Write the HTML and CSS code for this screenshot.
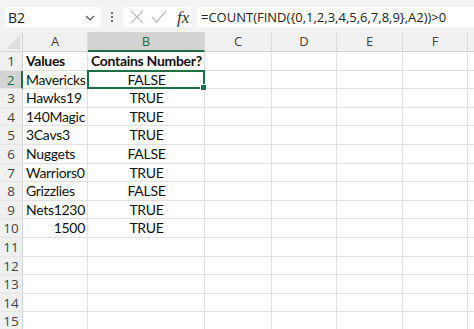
FILE: index.html
```html
<!DOCTYPE html>
<html>
<head>
<meta charset="utf-8">
<link rel="stylesheet" href="styles.css">
</head>
<body>
<div class="toolbar">
  <div class="namebox"><span>B2</span>
    <svg class="chev" width="10" height="6" viewBox="0 0 10 6"><path d="M1 1 L5 5 L9 1" fill="none" stroke="#555" stroke-width="1.2"/></svg>
  </div>
  <div class="dots"><i></i><i></i><i></i></div>
  <div class="fxbox">
    <svg width="14" height="14" viewBox="0 0 14 14"><path d="M1 1 L13 13 M13 1 L1 13" stroke="#bdbdbd" stroke-width="1.3" fill="none"/></svg>
    <svg width="16" height="14" viewBox="0 0 16 14"><path d="M1 7 L5.5 12 L15 1" stroke="#bdbdbd" stroke-width="1.3" fill="none"/></svg>
    <span class="fx">fx</span>
  </div>
  <div class="formula">=COUNT(FIND({0,1,2,3,4,5,6,7,8,9},A2))&gt;0</div>
</div>
<div class="grid">
  <div class="corner"><svg width="16" height="16" viewBox="0 0 16 16"><path d="M16 2 L16 16 L2 16 Z" fill="#dedede"/></svg></div>
  <div class="ch">A</div><div class="ch sel">B</div><div class="ch">C</div><div class="ch">D</div><div class="ch">E</div><div class="ch">F</div><div class="ch last"></div>

  <div class="rh">1</div><div class="c b">Values</div><div class="c b">Contains Number?</div><div class="c"></div><div class="c"></div><div class="c"></div><div class="c"></div><div class="c last"></div>
  <div class="rh rsel">2</div><div class="c">Mavericks</div><div class="c ctr active">FALSE<span class="handle"></span></div><div class="c"></div><div class="c"></div><div class="c"></div><div class="c"></div><div class="c last"></div>
  <div class="rh">3</div><div class="c">Hawks19</div><div class="c ctr">TRUE</div><div class="c"></div><div class="c"></div><div class="c"></div><div class="c"></div><div class="c last"></div>
  <div class="rh">4</div><div class="c">140Magic</div><div class="c ctr">TRUE</div><div class="c"></div><div class="c"></div><div class="c"></div><div class="c"></div><div class="c last"></div>
  <div class="rh">5</div><div class="c">3Cavs3</div><div class="c ctr">TRUE</div><div class="c"></div><div class="c"></div><div class="c"></div><div class="c"></div><div class="c last"></div>
  <div class="rh">6</div><div class="c">Nuggets</div><div class="c ctr">FALSE</div><div class="c"></div><div class="c"></div><div class="c"></div><div class="c"></div><div class="c last"></div>
  <div class="rh">7</div><div class="c">Warriors0</div><div class="c ctr">TRUE</div><div class="c"></div><div class="c"></div><div class="c"></div><div class="c"></div><div class="c last"></div>
  <div class="rh">8</div><div class="c">Grizzlies</div><div class="c ctr">FALSE</div><div class="c"></div><div class="c"></div><div class="c"></div><div class="c"></div><div class="c last"></div>
  <div class="rh">9</div><div class="c">Nets1230</div><div class="c ctr">TRUE</div><div class="c"></div><div class="c"></div><div class="c"></div><div class="c"></div><div class="c last"></div>
  <div class="rh">10</div><div class="c rt">1500</div><div class="c ctr">TRUE</div><div class="c"></div><div class="c"></div><div class="c"></div><div class="c"></div><div class="c last"></div>
  <div class="rh">11</div><div class="c"></div><div class="c"></div><div class="c"></div><div class="c"></div><div class="c"></div><div class="c"></div><div class="c last"></div>
  <div class="rh">12</div><div class="c"></div><div class="c"></div><div class="c"></div><div class="c"></div><div class="c"></div><div class="c"></div><div class="c last"></div>
  <div class="rh">13</div><div class="c"></div><div class="c"></div><div class="c"></div><div class="c"></div><div class="c"></div><div class="c"></div><div class="c last"></div>
  <div class="rh">14</div><div class="c"></div><div class="c"></div><div class="c"></div><div class="c"></div><div class="c"></div><div class="c"></div><div class="c last"></div>
  <div class="rh">15</div><div class="c"></div><div class="c"></div><div class="c"></div><div class="c"></div><div class="c"></div><div class="c"></div><div class="c last"></div>
</div>
</body>
</html>
```
FILE: styles.css
```css
html, body { margin: 0; padding: 0; background: #fff; }
body { width: 474px; height: 329px; overflow: hidden; font-family: "Open Sans", "Noto Sans", sans-serif; }

.toolbar {
  height: 32px;
  box-sizing: border-box;
  background: #f3f3f3;
  display: flex;
  align-items: flex-start;
  padding: 7px 0 0 5px;
}
.namebox {
  width: 96px; height: 20px;
  background: #fff; border-radius: 3px;
  display: flex; align-items: center; justify-content: space-between;
  padding: 0 6px 0 3px; box-sizing: border-box;
  font-size: 14px; color: #222;
}
.chev { margin-top: 1px; }
.dots {
  width: 22px; height: 20px;
  display: flex; flex-direction: column; align-items: center; justify-content: center; gap: 2px;
}
.dots i { width: 2px; height: 2px; background: #444; border-radius: 1px; display: block; }
.fxbox {
  width: 69px; height: 20px; background: #fff; border-radius: 3px;
  display: flex; align-items: center; gap: 7px; padding-left: 7px; box-sizing: border-box;
}
.fx { font-family: "Liberation Serif", "DejaVu Serif", serif; font-style: italic; font-size: 17px; color: #333; margin-left: 3px; line-height: 1; }
.formula {
  margin-left: 5px; flex: 1; height: 20px; background: #fff; border-radius: 3px 0 0 3px;
  font-size: 13px; line-height: 20px; color: #222; padding-left: 4px; white-space: nowrap;
}

.grid {
  display: grid;
  grid-template-columns: 23px 65px 117px 67px 65px 66px 65px 6px;
  grid-template-rows: 20px repeat(15, 18.6px);
  font-family: Lato, "Open Sans", sans-serif;
}
.corner, .ch {
  background: #f0f0f0; border-bottom: 1px solid #d4d4d4; box-sizing: border-box;
}
.corner { display: flex; align-items: flex-end; justify-content: flex-end; padding: 0 2px 2px 0; border-right: 1px solid #d4d4d4; }
.ch {
  border-right: 1px solid #dcdcdc;
  font-family: "Open Sans", "Noto Sans", sans-serif;
  font-size: 13px; color: #444; text-align: center; line-height: 19px;
}
.ch.sel { background: #d3d3d3; color: #1e6f43; border-bottom: 2px solid #1e6f43; }
.ch.last { border-right: none; }
.rh {
  background: #f0f0f0; border-right: 1px solid #d4d4d4; border-bottom: 1px solid #e6e6e6;
  box-sizing: border-box;
  font-family: "Open Sans", "Noto Sans", sans-serif;
  font-size: 13.5px; color: #444; text-align: center; line-height: 18px;
}
.rh.rsel { background: #d3d3d3; color: #1e6f43; border-right: 2px solid #1e6f43; }
.c {
  border-right: 1px solid #e1e1e1; border-bottom: 1px solid #e1e1e1; box-sizing: border-box;
  font-size: 14px; letter-spacing: -0.3px; color: #111; line-height: 18px; padding: 0 2px 0 3px; white-space: nowrap;
}
.c.last { border-right: none; }
.c.b { font-weight: bold; }
.c.ctr { text-align: center; }
.c.rt { text-align: right; }
.c.active { position: relative; border: 2px solid #1e6f43; margin: -1px 0 0 -1px; line-height: 16px; }
.handle { position: absolute; right: -4px; bottom: -4px; width: 5px; height: 5px; background: #1e6f43; border: 1px solid #fff; }
```
